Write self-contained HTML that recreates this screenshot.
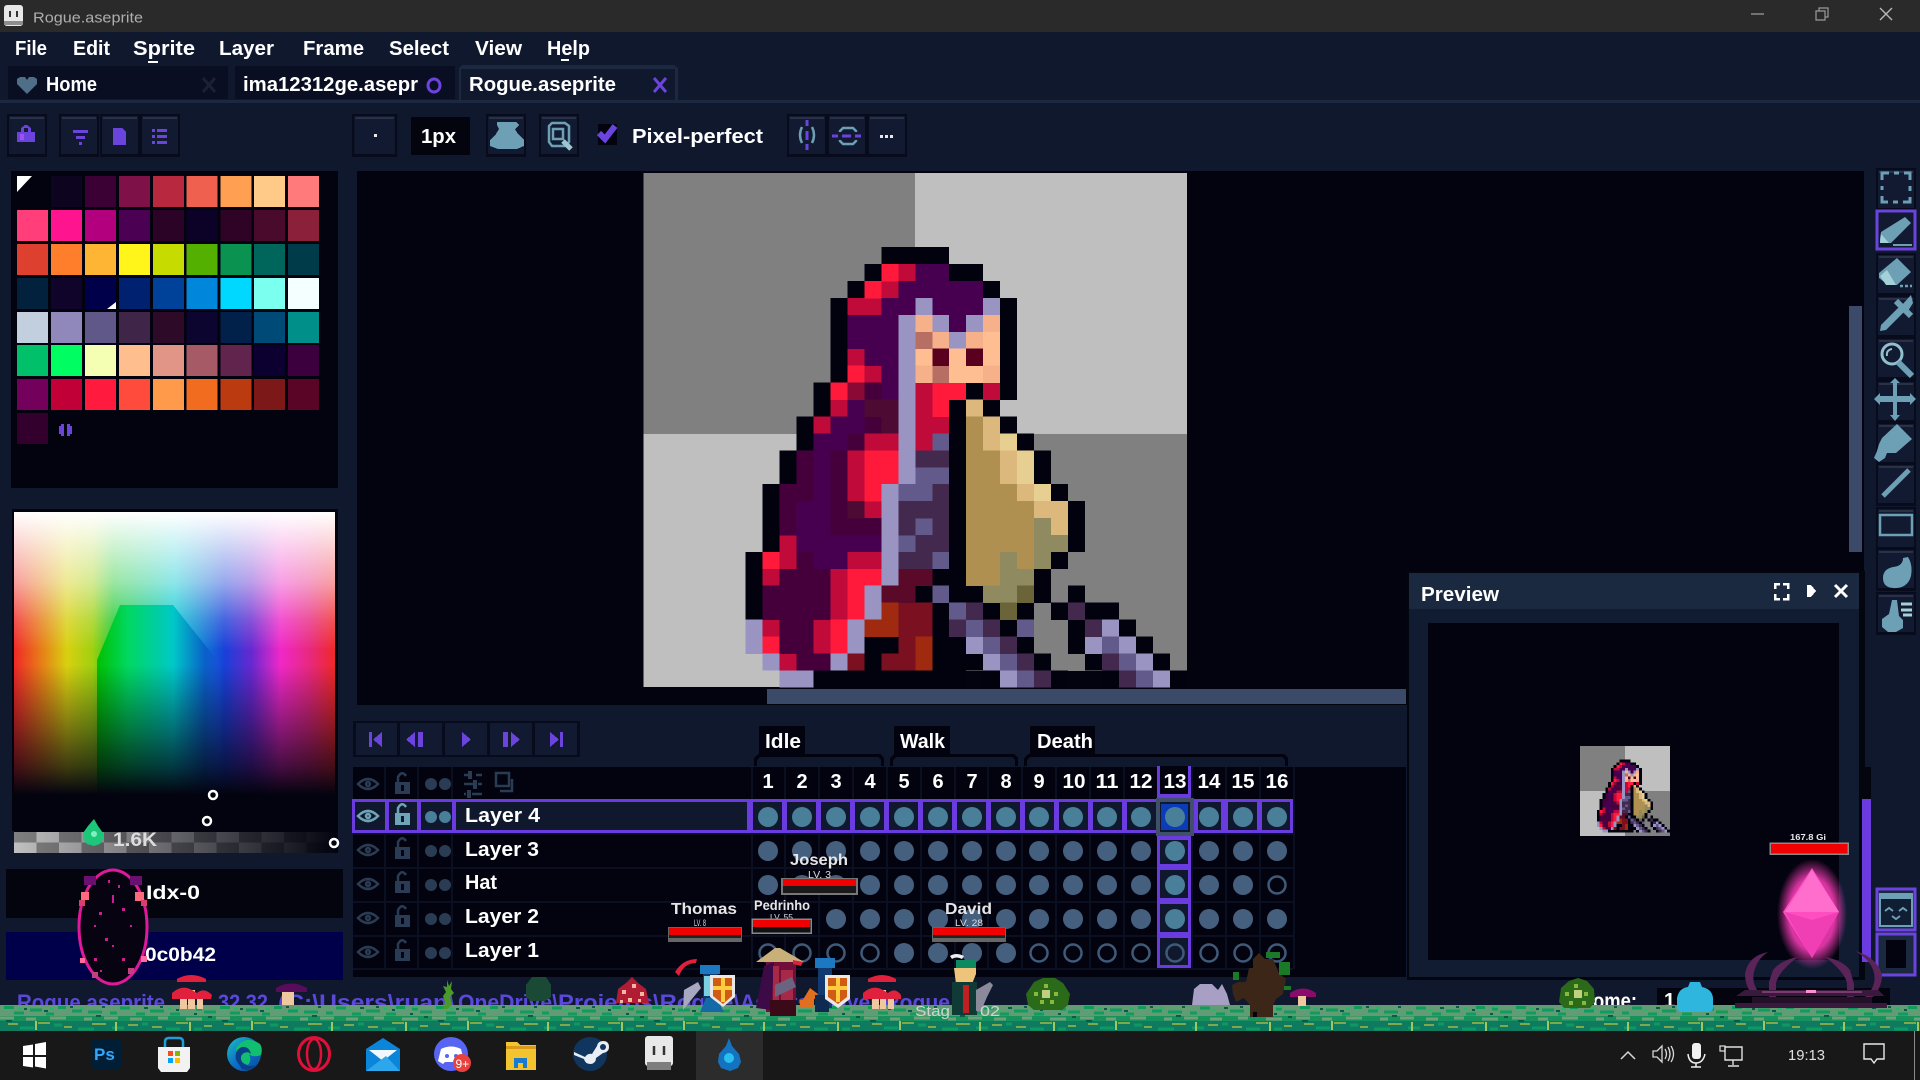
<!DOCTYPE html>
<html><head><meta charset="utf-8"><title>Rogue.aseprite</title>
<style>
html,body{margin:0;padding:0;background:#10182e;width:1920px;height:1080px;overflow:hidden}
svg{display:block;position:absolute;left:0;top:0}
text{font-family:"Liberation Sans",sans-serif;font-weight:700;fill:#fff}
.n{font-weight:400}
.c{shape-rendering:crispEdges}
</style></head><body>
<svg width="1920" height="1080" viewBox="0 0 1920 1080">
<defs>
<linearGradient id="hue" x1="0" x2="1" y1="0" y2="0"><stop offset="0" stop-color="#f02828"/><stop offset=".08" stop-color="#e87818"/><stop offset=".165" stop-color="#d8d010"/><stop offset=".245" stop-color="#a0d010"/><stop offset=".31" stop-color="#20c830"/><stop offset=".5" stop-color="#00c8d0"/><stop offset=".655" stop-color="#1840d8"/><stop offset=".74" stop-color="#6828d0"/><stop offset=".83" stop-color="#f028c8"/><stop offset=".92" stop-color="#e82880"/><stop offset="1" stop-color="#f02828"/></linearGradient>
<linearGradient id="dome" x1="97" x2="220" y1="0" y2="0" gradientUnits="userSpaceOnUse"><stop offset="0" stop-color="#00c000"/><stop offset=".25" stop-color="#00d860"/><stop offset=".62" stop-color="#00c8c8"/><stop offset=".88" stop-color="#0a60c8"/><stop offset="1" stop-color="#1840d8" stop-opacity="0"/></linearGradient>
<linearGradient id="wh" x1="0" x2="0" y1="512" y2="650" gradientUnits="userSpaceOnUse"><stop offset="0" stop-color="#fff" stop-opacity="1"/><stop offset=".51" stop-color="#fff" stop-opacity=".55"/><stop offset=".78" stop-color="#fff" stop-opacity=".2"/><stop offset="1" stop-color="#fff" stop-opacity="0"/></linearGradient>
<linearGradient id="bl" x1="0" x2="0" y1="665" y2="795" gradientUnits="userSpaceOnUse"><stop offset="0" stop-color="#03030f" stop-opacity="0"/><stop offset=".5" stop-color="#03030f" stop-opacity=".45"/><stop offset=".78" stop-color="#03030f" stop-opacity=".72"/><stop offset="1" stop-color="#03030f" stop-opacity="1"/></linearGradient>
<linearGradient id="fade" x1="0" x2="1" y1="0" y2="0"><stop offset="0" stop-color="#03030f" stop-opacity="0"/><stop offset="1" stop-color="#03030f" stop-opacity="1"/></linearGradient>
<radialGradient id="glow"><stop offset=".65" stop-color="#ff3ebc" stop-opacity=".85"/><stop offset="1" stop-color="#ff3ebc" stop-opacity="0"/></radialGradient>
<linearGradient id="edge" x1="0" x2="1" y1="0" y2="1"><stop offset="0" stop-color="#1ec0c0"/><stop offset=".5" stop-color="#0c70c8"/><stop offset="1" stop-color="#0a4a9a"/></linearGradient>
<pattern id="chk" width="45" height="21" patternUnits="userSpaceOnUse" patternTransform="translate(14 832)"><rect width="45" height="21" fill="#c0c0c0"/><rect width="22.5" height="10.5" fill="#808080"/><rect x="22.5" y="10.5" width="22.5" height="10.5" fill="#808080"/></pattern>
<pattern id="grass" width="216" height="26" patternUnits="userSpaceOnUse" patternTransform="translate(0 1005)">
<rect width="216" height="26" fill="#0e7a60"/>
<rect width="216" height="11" fill="#629c74"/>
<rect y="11" width="216" height="5" fill="#17925c"/>
<path d="M4 2.5h10M30 5h12M58 2.5h8M88 7h14M120 3h10M150 6h14M180 2.5h9M204 7h12M14 8h10M46 9h8M72 6h10M110 8h7M136 9h9M170 9h10M196 4h6" stroke="#0f9c5c" stroke-width="3" fill="none"/>
<path d="M0 13h14M26 14h10M50 13h16M84 14h8M104 13h14M130 14h12M158 13h10M186 14h16" stroke="#6fa078" stroke-width="3" fill="none"/>
<path d="M8 19h10M38 18h12M64 22h8M92 19h14M128 20h10M152 22h10M176 18h12M204 21h8" stroke="#7ea84a" stroke-width="2" fill="none"/>
<path d="M20 23h14M54 20h8M78 24h16M112 23h12M142 19h6M166 24h14M194 24h8" stroke="#0c9a60" stroke-width="3" fill="none"/>
<path d="M36 16v9M116 17v9M190 17v9" stroke="#a0c860" stroke-width="2" fill="none"/>
<path d="M6 16h6M44 6h4M96 11h5M144 3h4M176 5h3M208 12h4M24 4h3M70 2h3M102 2h3M160 2h3M194 9h3" stroke="#0a5a48" stroke-width="2" fill="none"/>
<path d="M18 4h4M50 4h3M80 3h4M132 5h3M168 4h3M198 2h3" stroke="#22b868" stroke-width="2" fill="none"/>
</pattern>
<g id="btn"><rect width="40" height="43" fill="#080b1b"/><rect x="2" y="2" width="36" height="38" fill="#111a30"/><rect x="3" y="3" width="34" height="2" fill="#2a3147"/></g>
<g id="spr" fill="none" stroke-width="1.02" class="c">
<path stroke="#02020f" d="M14 .5h4M13 1.5h1M18 1.5h2M12 2.5h1M20 2.5h1M11 3.5h1M21 3.5h1M11 4.5h1M21 4.5h1M11 5.5h1M21 5.5h1M11 6.5h1M21 6.5h1M11 7.5h1M21 7.5h1M10 8.5h1M19 8.5h1M21 8.5h1M10 9.5h1M18 9.5h1M20 9.5h1M9 10.5h1M18 10.5h1M21 10.5h1M9 11.5h1M18 11.5h1M22 11.5h1M8 12.5h1M18 12.5h1M23 12.5h1M8 13.5h1M18 13.5h1M23 13.5h1M7 14.5h1M18 14.5h1M24 14.5h1M7 15.5h1M18 15.5h1M25 15.5h1M7 16.5h1M18 16.5h1M25 16.5h1M7 17.5h1M18 17.5h1M25 17.5h1M6 18.5h1M18 18.5h1M24 18.5h1M6 19.5h1M17 19.5h2M23 19.5h1M6 20.5h1M16 20.5h1M18 20.5h2M23 20.5h1M25 20.5h1M6 21.5h1M17 21.5h1M20 21.5h1M22 21.5h1M24 21.5h1M26 21.5h2M17 22.5h1M21 22.5h1M25 22.5h1M28 22.5h1M13 23.5h2M17 23.5h2M22 23.5h1M25 23.5h1M29 23.5h1M13 24.5h1M17 24.5h3M23 24.5h1M26 24.5h1M30 24.5h1M10 25.5h9M20 25.5h1M24 25.5h1M27 25.5h1M31 25.5h1"/>
<path stroke="#bf0a3a" d="M15 1.5h1M14 2.5h1M12 3.5h2M12 6.5h1M13 7.5h1M11 9.5h1M10 10.5h1M16 10.5h1M17 10.5h1M13 11.5h2M16 11.5h1M16 8.5h1M20 8.5h1M16 9.5h1M12 12.5h1M12 13.5h1M12 14.5h1M13 15.5h1M8 17.5h1M8 18.5h1M12 18.5h2M7 19.5h1M11 19.5h1M11 20.5h1M11 21.5h1M7 22.5h1M10 22.5h1M10 23.5h1M8 24.5h1"/>
<path stroke="#ff1a3c" d="M14 1.5h1M13 2.5h1M12 7.5h1M11 8.5h1M17 8.5h2M17 9.5h1M13 12.5h2M13 13.5h2M13 14.5h1M7 18.5h1M12 19.5h2M12 20.5h1M12 21.5h1M11 22.5h1M7 23.5h1M11 23.5h1"/>
<path stroke="#47004f" d="M16 1.5h2M15 2.5h5M14 3.5h2M17 3.5h3M12 4.5h3M18 4.5h1M12 5.5h3M13 6.5h2M14 7.5h1M14 8.5h1M12 9.5h1M11 10.5h2M10 11.5h2M10 12.5h1M10 13.5h1M10 14.5h1M9 15.5h2M9 16.5h2M9 17.5h5M10 18.5h2"/>
<path stroke="#45003c" d="M13 8.5h1M13 10.5h1M12 11.5h1M9 12.5h1M11 12.5h1M9 13.5h1M11 13.5h1M8 14.5h2M11 14.5h1M8 15.5h1M11 15.5h1M8 16.5h1M11 16.5h3M9 18.5h1M8 19.5h3M7 20.5h4M7 21.5h4M8 22.5h2M8 23.5h2M9 24.5h2"/>
<path stroke="#4d0a33" d="M13 9.5h2M14 10.5h1M12 15.5h1"/>
<path stroke="#8a0a35" d="M12 8.5h1"/>
<path stroke="#9a94c2" d="M16 3.5h1M20 3.5h1M15 4.5h1M17 4.5h1M19 4.5h1M15 5.5h1M18 5.5h1M15 6.5h1M15 7.5h1M15 8.5h1M15 9.5h1M15 10.5h1M15 11.5h1M15 12.5h1M15 13.5h1M14 14.5h1M14 15.5h1M14 16.5h1M14 17.5h1M14 18.5h1M14 19.5h1M13 20.5h1M13 21.5h1M6 22.5h1M12 22.5h1M27 22.5h1M6 23.5h1M12 23.5h1M19 23.5h1M26 23.5h1M28 23.5h1M7 24.5h1M11 24.5h1M20 24.5h1M29 24.5h1M8 25.5h2M21 25.5h1M30 25.5h1"/>
<path stroke="#625a8a" d="M17 11.5h1M16 13.5h2M15 14.5h2M16 16.5h1M15 17.5h1M17 18.5h1M17 20.5h1M18 21.5h1M19 22.5h1M22 22.5h1M20 23.5h1M27 23.5h1M21 24.5h1M28 24.5h1M22 25.5h1M29 25.5h1"/>
<path stroke="#44294f" d="M16 12.5h2M17 14.5h1M15 15.5h3M15 16.5h1M17 16.5h1M16 17.5h2M15 18.5h2M19 21.5h1M25 21.5h1M18 22.5h1M20 22.5h1M26 22.5h1M21 23.5h1M22 24.5h1M27 24.5h1M23 25.5h1M28 25.5h1"/>
<path stroke="#ffbe92" d="M20 5.5h1M16 6.5h1M18 6.5h1M20 6.5h1M18 7.5h2"/>
<path stroke="#f6b18b" d="M16 4.5h1M20 4.5h1M17 5.5h1M19 5.5h1M16 7.5h1M20 7.5h1"/>
<path stroke="#b76e63" d="M16 5.5h1M17 7.5h1"/>
<path stroke="#5a001f" d="M17 6.5h1M19 6.5h1"/>
<path stroke="#e6cf90" d="M21 11.5h1M22 12.5h1M22 13.5h1M23 14.5h1"/>
<path stroke="#dcb87c" d="M19 9.5h1M20 10.5h1M20 11.5h1M21 12.5h1M21 13.5h1M22 14.5h1M23 15.5h2M24 16.5h1"/>
<path stroke="#b09050" d="M19 10.5h1M19 11.5h1M19 12.5h2M19 13.5h2M19 14.5h3M19 15.5h4M19 16.5h4M19 17.5h4M19 18.5h2M22 18.5h1M19 19.5h2"/>
<path stroke="#8f8a5f" d="M23 16.5h1M23 17.5h2M21 18.5h1M23 18.5h1M21 19.5h2M20 20.5h2"/>
<path stroke="#6b6438" d="M22 20.5h1M21 21.5h1"/>
<path stroke="#7a1020" d="M15 21.5h2M15 22.5h2M15 23.5h1M12 24.5h1M14 24.5h2"/>
<path stroke="#5a0a28" d="M15 19.5h2M14 20.5h2"/>
<path stroke="#a02a10" d="M14 21.5h1M13 22.5h2M16 23.5h1M16 24.5h1"/>
</g>
</defs>

<!-- base -->
<rect width="1920" height="1080" fill="#10182e" class="c"/>
<!-- title bar -->
<rect width="1920" height="32" fill="#2a2a2a" class="c"/>
<rect x="4" y="5" width="19" height="21" rx="3" fill="#e8e8e8"/><rect x="4" y="21" width="19" height="4" fill="#8e8e8e"/><path d="M10 11v6M17 11v6" stroke="#333" stroke-width="2"/>
<text x="33" y="22.5" font-size="15" class="n" style="fill:#aeaeae;font-weight:400" textLength="110" lengthAdjust="spacingAndGlyphs">Rogue.aseprite</text>
<path d="M1751 14h13" stroke="#9a9a9a" stroke-width="1.3"/><path d="M1816 11h9v9h-9zM1819 11v-3h9v9h-3" stroke="#9a9a9a" stroke-width="1.2" fill="none"/><path d="M1880 8l12 12M1892 8l-12 12" stroke="#b8b8b8" stroke-width="1.4"/>

<!-- menu -->
<g font-size="20">
<text x="15" y="55" textLength="32" lengthAdjust="spacingAndGlyphs">File</text>
<text x="73" y="55" textLength="37" lengthAdjust="spacingAndGlyphs">Edit</text>
<text x="133" y="55" textLength="62" lengthAdjust="spacingAndGlyphs">Sprite</text>
<text x="219" y="55" textLength="55" lengthAdjust="spacingAndGlyphs">Layer</text>
<text x="303" y="55" textLength="61" lengthAdjust="spacingAndGlyphs">Frame</text>
<text x="389" y="55" textLength="60" lengthAdjust="spacingAndGlyphs">Select</text>
<text x="475" y="55" textLength="47" lengthAdjust="spacingAndGlyphs">View</text>
<text x="547" y="55" textLength="43" lengthAdjust="spacingAndGlyphs">Help</text>
</g>
<path d="M148 62h10M561 60h8" stroke="#fff" stroke-width="2" class="c"/>

<!-- tabs -->
<rect x="0" y="100" width="1920" height="3" fill="#1c2840" class="c"/>
<rect x="8" y="66" width="220" height="33" fill="#0a0e22" class="c"/>
<rect x="235" y="66" width="220" height="33" fill="#0a0e22" class="c"/>
<path d="M459 101V68l3-3h212l4 3v33h-3V69h-214v32z" fill="#1c2840" class="c"/>
<path d="M27 94l-10-10v-5l3-2h5l2 3 2-3h5l3 2v5z" fill="#4f6f88"/>
<text x="46" y="91" font-size="20" textLength="51" lengthAdjust="spacingAndGlyphs">Home</text>
<path d="M203 78l12 14M215 78l-12 14" stroke="#1a2036" stroke-width="3"/>
<text x="243" y="91" font-size="20" textLength="175" lengthAdjust="spacingAndGlyphs">ima12312ge.asepr</text>
<ellipse cx="434" cy="85.500" rx="6" ry="6.500" fill="none" stroke="#6a44dd" stroke-width="3"/>
<text x="469" y="91" font-size="20" textLength="147" lengthAdjust="spacingAndGlyphs">Rogue.aseprite</text>
<path d="M654 78l12 14M666 78l-12 14" stroke="#6a44dd" stroke-width="3"/>

<!-- toolbar -->
<use href="#btn" transform="translate(7 114)"/>
<path d="M21 132v-4l4-3h2l4 3v4h4v10H17v-10z" fill="#6a44dd" class="c"/><rect x="24" y="128" width="4" height="4" fill="#111a30" class="c"/><rect x="20" y="134" width="4" height="6" fill="#a050f0" class="c"/>
<use href="#btn" transform="translate(59 114)"/><use href="#btn" transform="translate(100 114)"/><use href="#btn" transform="translate(140 114)"/>
<path d="M73 130h15v3H73zM76 136h9v3h-9zM79 142h3v3h-3z" fill="#6a44dd" class="c"/>
<path d="M113 128h9l4 4v13h-13z" fill="#6a44dd" class="c"/>
<path d="M152 129h3v3h-3zM157 129h10v3h-10zM152 135h3v3h-3zM157 135h10v3h-10zM152 141h3v3h-3zM157 141h10v3h-10z" fill="#6a44dd" class="c"/>
<use href="#btn" transform="translate(352 114) scale(1.13 1)"/>
<rect x="374" y="134" width="3" height="3" fill="#e8e8e8" class="c"/>
<rect x="411" y="117" width="59" height="38" fill="#04040f" class="c"/>
<text x="421" y="143" font-size="20" textLength="35" lengthAdjust="spacingAndGlyphs">1px</text>
<use href="#btn" transform="translate(486 114)"/>
<path d="M497 122h19l3 3-4 4 3 5 6 6v6l-7 3h-19l-8-3v-6l6-6 3-5-2-4z" fill="#6d9fb5" class="c"/>
<use href="#btn" transform="translate(539 114)"/>
<path d="M549 126l3-3h13l4 3v16l-4 4h-13l-3-4z" fill="none" stroke="#6d9fb5" stroke-width="2.5"/><path d="M553 129h10v10h-10z" fill="none" stroke="#6d9fb5" stroke-width="2.5"/><path d="M563 141l8 8" stroke="#9cc6d0" stroke-width="5"/>
<rect x="598" y="124" width="19" height="21" fill="#04040f" class="c"/>
<path d="M599 133l6 6 10-13" stroke="#6a44dd" stroke-width="6" fill="none"/>
<text x="632" y="143" font-size="20" textLength="131" lengthAdjust="spacingAndGlyphs">Pixel-perfect</text>
<use href="#btn" transform="translate(787 114)"/><use href="#btn" transform="translate(827 114)"/><use href="#btn" transform="translate(867 114)"/>
<path d="M802 127q-4 8 0 16M812 127q4 8 0 16M840 132v-1l3-3h10l3 3v1M840 140v1l3 3h10l3-3v-1" stroke="#6d9fb5" stroke-width="2.500" fill="none"/>
<path d="M807 120v6M807 131v9M807 144v6M832 136h6M842 136h9M855 136h6" stroke="#6a44dd" stroke-width="3" class="c"/>
<path d="M880 135h3v3h-3zM885 135h3v3h-3zM890 135h3v3h-3z" fill="#e8e8e8" class="c"/>

<!-- palette -->
<rect x="11" y="171" width="327" height="317" fill="#03030f" class="c"/>
<g class="c">
<rect x="17" y="176" width="31" height="31" fill="#03030f"/><rect x="51" y="176" width="31" height="31" fill="#0d0420"/><rect x="85" y="176" width="31" height="31" fill="#3b0034"/><rect x="119" y="176" width="31" height="31" fill="#7e1147"/><rect x="153" y="176" width="31" height="31" fill="#b8283f"/><rect x="186.500" y="176" width="31" height="31" fill="#f0604e"/><rect x="220.500" y="176" width="31" height="31" fill="#ff9f52"/><rect x="254" y="176" width="31" height="31" fill="#ffc987"/><rect x="288" y="176" width="31" height="31" fill="#ff7b7b"/>
<rect x="17" y="210" width="31" height="31" fill="#ff3e7a"/><rect x="51" y="210" width="31" height="31" fill="#ff1490"/><rect x="85" y="210" width="31" height="31" fill="#b3007f"/><rect x="119" y="210" width="31" height="31" fill="#4c0053"/><rect x="153" y="210" width="31" height="31" fill="#2a0326"/><rect x="186.500" y="210" width="31" height="31" fill="#0c0228"/><rect x="220.500" y="210" width="31" height="31" fill="#2e0326"/><rect x="254" y="210" width="31" height="31" fill="#4a0a2c"/><rect x="288" y="210" width="31" height="31" fill="#8a2039"/>
<rect x="17" y="244" width="31" height="31" fill="#de4030"/><rect x="51" y="244" width="31" height="31" fill="#ff7e2b"/><rect x="85" y="244" width="31" height="31" fill="#ffb534"/><rect x="119" y="244" width="31" height="31" fill="#fff51a"/><rect x="153" y="244" width="31" height="31" fill="#c6dc00"/><rect x="186.500" y="244" width="31" height="31" fill="#54b000"/><rect x="220.500" y="244" width="31" height="31" fill="#099250"/><rect x="254" y="244" width="31" height="31" fill="#00665c"/><rect x="288" y="244" width="31" height="31" fill="#003b4a"/>
<rect x="17" y="278" width="31" height="31" fill="#01213c"/><rect x="51" y="278" width="31" height="31" fill="#10042a"/><rect x="85" y="278" width="31" height="31" fill="#00004a"/><rect x="119" y="278" width="31" height="31" fill="#002070"/><rect x="153" y="278" width="31" height="31" fill="#00429a"/><rect x="186.500" y="278" width="31" height="31" fill="#0087dc"/><rect x="220.500" y="278" width="31" height="31" fill="#00d8ff"/><rect x="254" y="278" width="31" height="31" fill="#7bffee"/><rect x="288" y="278" width="31" height="31" fill="#f4ffff"/>
<rect x="17" y="312" width="31" height="31" fill="#c1cfdf"/><rect x="51" y="312" width="31" height="31" fill="#9088bb"/><rect x="85" y="312" width="31" height="31" fill="#5f5888"/><rect x="119" y="312" width="31" height="31" fill="#3f2648"/><rect x="153" y="312" width="31" height="31" fill="#2c0a28"/><rect x="186.500" y="312" width="31" height="31" fill="#0b0530"/><rect x="220.500" y="312" width="31" height="31" fill="#01204a"/><rect x="254" y="312" width="31" height="31" fill="#004a78"/><rect x="288" y="312" width="31" height="31" fill="#009089"/>
<rect x="17" y="345" width="31" height="31" fill="#00c06a"/><rect x="51" y="345" width="31" height="31" fill="#00fe63"/><rect x="85" y="345" width="31" height="31" fill="#f4ffb4"/><rect x="119" y="345" width="31" height="31" fill="#ffbe8e"/><rect x="153" y="345" width="31" height="31" fill="#e19586"/><rect x="186.500" y="345" width="31" height="31" fill="#a55a66"/><rect x="220.500" y="345" width="31" height="31" fill="#61244c"/><rect x="254" y="345" width="31" height="31" fill="#0c0030"/><rect x="288" y="345" width="31" height="31" fill="#3c003e"/>
<rect x="17" y="379" width="31" height="31" fill="#73005a"/><rect x="51" y="379" width="31" height="31" fill="#c10037"/><rect x="85" y="379" width="31" height="31" fill="#ff1a3e"/><rect x="119" y="379" width="31" height="31" fill="#ff4b3c"/><rect x="153" y="379" width="31" height="31" fill="#ff9a4a"/><rect x="186.500" y="379" width="31" height="31" fill="#f26c20"/><rect x="220.500" y="379" width="31" height="31" fill="#bb3a10"/><rect x="254" y="379" width="31" height="31" fill="#7c1818"/><rect x="288" y="379" width="31" height="31" fill="#5a0426"/>
<rect x="17" y="413" width="31" height="31" fill="#33002e"/>
</g>
<path d="M17 176h15l-15 16z" fill="#fff"/>
<path d="M116 302v7h-9z" fill="#fff"/>
<path d="M59 426h2v-2h3v12h-3v-2h-2zM67 424h3v2h2v8h-2v2h-3z" fill="#6a44dd" class="c"/>

<!-- color picker -->
<rect x="12" y="509" width="326" height="322" fill="#03030f" class="c"/>
<rect x="14" y="512" width="321" height="318" fill="url(#hue)" class="c"/>
<rect x="14" y="512" width="321" height="138" fill="url(#wh)" class="c"/>
<path d="M97 830V660l23-55h53l44 55v170z" fill="url(#dome)"/>
<rect x="14" y="665" width="321" height="130" fill="url(#bl)" class="c"/>
<rect x="14" y="795" width="324" height="37" fill="#03030f" class="c"/>
<rect x="14" y="832" width="324" height="21" fill="url(#chk)" class="c"/>
<rect x="14" y="832" width="324" height="21" fill="url(#fade)" class="c"/>
<g fill="none" stroke="#fff" stroke-width="2.5"><circle cx="213" cy="795" r="4"/><circle cx="207" cy="821" r="4"/><circle cx="334" cy="843" r="4"/></g>
<path d="M94 819l4 7 5 7v6l-3 5-6 2-7-2-4-5v-6l5-7z" fill="#1ec67a"/><circle cx="94" cy="834" r="3" fill="#7ff0c0"/>
<text x="113" y="846" font-size="19" textLength="44" lengthAdjust="spacingAndGlyphs" style="fill:#dcdcdc">1.6K</text>

<!-- idx / fg -->
<rect x="6" y="869" width="337" height="49" fill="#04040f" class="c"/>
<rect x="6" y="932" width="337" height="48" fill="#00004a" class="c"/>
<text x="146" y="899" font-size="19" textLength="54" lengthAdjust="spacingAndGlyphs">Idx-0</text>
<text x="145" y="961" font-size="19" textLength="71" lengthAdjust="spacingAndGlyphs">0c0b42</text>
<!-- portal -->
<ellipse cx="113" cy="927" rx="34" ry="57" fill="#070310" stroke="#e0189a" stroke-width="3"/>
<g class="c"><rect x="84" y="876" width="12" height="9" fill="#6a1070"/><rect x="130" y="876" width="12" height="9" fill="#6a1070"/><rect x="81" y="892" width="8" height="8" fill="#ff6a7d"/><rect x="135" y="892" width="9" height="9" fill="#ff6a7d"/><rect x="79" y="900" width="6" height="6" fill="#d8406a"/><rect x="141" y="900" width="6" height="6" fill="#d8406a"/><rect x="80" y="958" width="5" height="5" fill="#ff6a9d"/><rect x="141" y="956" width="6" height="6" fill="#ff6a9d"/><rect x="92" y="972" width="6" height="6" fill="#c04080"/><rect x="128" y="968" width="6" height="6" fill="#c04080"/>
<path d="M99 912h3v3h-3zM122 908h3v3h-3zM112 895h2v8h-2zM94 925h2v2h-2zM130 925h2v2h-2zM108 880h2v3h-2zM118 885h2v3h-2zM105 938h3v3h-3zM94 958h3v3h-3zM122 958h3v3h-3zM112 945h2v2h-2zM100 970h2v2h-2z" fill="#c82090"/></g>

<!-- status text -->
<g font-size="22" style="fill:#5a48d8">
<text x="17" y="1010" style="fill:#5a48d8" textLength="148" lengthAdjust="spacingAndGlyphs">Rogue.aseprite</text>
<text x="218" y="1010" style="fill:#5a48d8" textLength="50" lengthAdjust="spacingAndGlyphs">32 32</text>
<text x="278" y="1010" style="fill:#5a48d8" textLength="177" lengthAdjust="spacingAndGlyphs">(C:\Users\ruan\</text>
<text x="458" y="1010" style="fill:#5a48d8" textLength="100" lengthAdjust="spacingAndGlyphs">OneDrive\</text>
<text x="558" y="1010" style="fill:#5a48d8" textLength="182" lengthAdjust="spacingAndGlyphs">Projetos\Rogue\</text>
<text x="740" y="1010" style="fill:#5a48d8" textLength="210" lengthAdjust="spacingAndGlyphs">Assets\Player\Rogue</text>
</g>

<!-- editor -->
<rect x="357" y="171" width="1507" height="534" fill="#03030f" class="c"/>
<g class="c"><rect x="643.600" y="173" width="271.400" height="261" fill="#808080"/><rect x="915" y="173" width="272" height="261" fill="#bfbfbf"/><rect x="643.600" y="434" width="271.400" height="253" fill="#bfbfbf"/><rect x="915" y="434" width="272" height="237" fill="#808080"/></g>
<use href="#spr" transform="translate(643.6 247.3) scale(16.98 16.93)"/>
<rect x="767" y="689" width="639" height="15" fill="#3a4a68" class="c"/>
<rect x="1849" y="306" width="13" height="246" fill="#3a4a68" class="c"/>

<!-- right toolbar bg -->
<rect x="1864" y="160" width="56" height="845" fill="#10182e" class="c"/>
<g>
<use href="#btn" transform="translate(1876 168)"/><use href="#btn" transform="translate(1876 253)"/><use href="#btn" transform="translate(1876 295)"/><use href="#btn" transform="translate(1876 337)"/><use href="#btn" transform="translate(1876 380)"/><use href="#btn" transform="translate(1876 422)"/><use href="#btn" transform="translate(1876 463)"/><use href="#btn" transform="translate(1876 507)"/><use href="#btn" transform="translate(1876 548)"/><use href="#btn" transform="translate(1876 592)"/>
<rect x="1877" y="211" width="38" height="38" fill="#111a30" stroke="#6a44dd" stroke-width="3" class="c"/>
</g>
<g fill="#6d9fb5" stroke="none">
<path d="M1882 180v-7h7M1894 173h5M1904 173h6v7M1910 186v5M1910 197v5h-7M1898 202h-5M1888 202h-6v-6M1882 190v-4" stroke="#6d9fb5" stroke-width="3" fill="none"/>
<path d="M1905 217l6 6-20 20h-11v-4l1-7z"/><path d="M1881 234l8 9h-9z" fill="#a4d0d8"/><path d="M1893 245h19" stroke="#6d9fb5" stroke-width="2"/>
<path d="M1897 258l14 14-14 13h-9l-9-7v-5z"/><path d="M1880 276l7-6 9 15h-10z" fill="#a4d0d8"/><path d="M1900 286h3M1905 286h3M1910 286h2" stroke="#6d9fb5" stroke-width="2.500"/>
<path d="M1880 331l1-6 19-19 5 5-19 19z"/><path d="M1896 301l15 15" stroke="#6d9fb5" stroke-width="6"/><path d="M1902 305l9-10 2 8-5 8z"/>
<circle cx="1892" cy="354" r="10" fill="none" stroke="#8fc0cc" stroke-width="3"/><path d="M1898 362l14 14" stroke="#6d9fb5" stroke-width="6"/><path d="M1887 356q-1-6 5-7" stroke="#8fc0cc" stroke-width="2" fill="none"/>
<path d="M1895 378l5 5h-3v13h13v-3l6 6-6 6v-3h-13v13h3l-5 6-5-6h3v-13h-13v3l-6-6 6-6v3h13v-13h-3z"/>
<path d="M1897 424l15 15-16 14h-9l-2 5-6 4-5-4 3-7 2-7 3-6z"/>
<path d="M1883 496l26-26" stroke="#6d9fb5" stroke-width="5"/>
<rect x="1880" y="515" width="32" height="20" fill="none" stroke="#6d9fb5" stroke-width="2.500"/>
<path d="M1883 578q0-9 10-11 10-1 10-9l5-1q5 8 3 19-3 11-14 12-14 1-14-10z"/>
<path d="M1897 600l2 16 4 4v8l-7 4h-8l-6-5v-8l7-5 3-14z"/><path d="M1901 604h11M1901 610h11M1903 615h9" stroke="#a4d0d8" stroke-width="3"/>
</g>

<!-- timeline dark -->
<rect x="353" y="767" width="1053" height="210" fill="#03030f" class="c"/>
<rect x="353" y="721" width="227" height="36" fill="#080b1b" class="c"/>
<g class="c" fill="#111a30"><rect x="356" y="723" width="41" height="32"/><rect x="400" y="723" width="42" height="32"/><rect x="445" y="723" width="42" height="32"/><rect x="490" y="723" width="42" height="32"/><rect x="535" y="723" width="42" height="32"/></g>
<g fill="#6a44dd" class="c">
<path d="M369 732h3v15h-3zM382 732v15l-9-7.500z"/><path d="M415 732v15l-9-7.500zM418 732h5v15h-5z"/><path d="M462 732l9 7.500-9 7.500z"/><path d="M503 732h5v15h-5zM511 732l9 7.500-9 7.500z"/><path d="M550 732l9 7.500-9 7.500zM560 732h3v15h-3z"/>
</g>
<!-- tags -->
<g fill="#03030f" class="c"><rect x="759" y="726" width="46" height="28"/><rect x="894" y="726" width="56" height="28"/><rect x="1030" y="726" width="65" height="28"/>
<path d="M754 766v-8l4-4h122l4 4v8h-3v-6l-3-3H760l-3 3v6z"/><path d="M890 766v-8l4-4h120l4 4v8h-3v-6l-3-3H896l-3 3v6z"/><path d="M1024 766v-8l4-4h256l4 4v8h-3v-6l-3-3h-252l-3 3v6z"/></g>
<text x="765" y="748" font-size="20" textLength="36" lengthAdjust="spacingAndGlyphs">Idle</text>
<text x="900" y="748" font-size="20" textLength="45" lengthAdjust="spacingAndGlyphs">Walk</text>
<text x="1037" y="748" font-size="20" textLength="56" lengthAdjust="spacingAndGlyphs">Death</text>

<!-- grid lines -->
<path d="M353 800h940M353 834h940M353 868h940M353 902h940M353 936h940M353 969h940" stroke="#0a1022" stroke-width="2" class="c"/>
<path d="M385 767v202M418 767v202M452 767v202M752 767v202M785 767v202M819 767v202M853 767v202M887 767v202M921 767v202M955 767v202M988 767v202M1022 767v202M1056 767v202M1090 767v202M1124 767v202M1158 767v202M1192 767v202M1226 767v202M1260 767v202M1294 767v202" stroke="#0a1022" stroke-width="2" class="c"/>

<!-- selected row -->
<rect x="352" y="799" width="941" height="34" fill="#6a3ce0" class="c"/>
<g fill="#10182e" class="c">
<rect x="355" y="802" width="30" height="28"/><rect x="389" y="802" width="28" height="28"/><rect x="421" y="802" width="31" height="28"/><rect x="456" y="802" width="291" height="28"/>
<rect x="753" y="802" width="29" height="28"/><rect x="787" y="802" width="29" height="28"/><rect x="821" y="802" width="29" height="28"/><rect x="855" y="802" width="29" height="28"/><rect x="889" y="802" width="29" height="28"/><rect x="923" y="802" width="29" height="28"/><rect x="957" y="802" width="29" height="28"/><rect x="991" y="802" width="29" height="28"/><rect x="1025" y="802" width="29" height="28"/><rect x="1059" y="802" width="29" height="28"/><rect x="1093" y="802" width="29" height="28"/><rect x="1127" y="802" width="29" height="28"/><rect x="1198" y="802" width="23" height="28"/><rect x="1228" y="802" width="29" height="28"/><rect x="1262" y="802" width="28" height="28"/>
</g>
<!-- col 13 -->
<rect x="1157" y="766" width="34" height="202" fill="#6a3ce0" class="c"/>
<rect x="1160" y="766" width="28" height="28" fill="#03030f" class="c"/>
<g fill="#10182e" class="c"><rect x="1160" y="840" width="28" height="24"/><rect x="1160" y="870" width="28" height="28"/><rect x="1160" y="904" width="28" height="28"/><rect x="1160" y="938" width="28" height="27"/></g>
<rect x="1156" y="798" width="38" height="38" fill="#3f5068" class="c"/><rect x="1160" y="802" width="30" height="30" fill="#10182e" class="c"/><rect x="1161" y="804" width="27" height="26" fill="#0a3cb8" class="c"/>

<!-- header icons -->
<g fill="none" stroke="#2a3c54" stroke-width="2.500">
<path d="M358 784q10-10 20 0q-10 10-20 0z"/><circle cx="368" cy="784" r="2"/>
<path d="M398 782v-5q4-7 8-1"/>
<path d="M464 775h6M476 775h6M464 784h10M478 784h4M464 794h2M472 794h10"/>
<rect x="496" y="773" width="13" height="13"/><path d="M512 779v12h-12"/>
</g>
<rect x="395" y="782" width="15" height="12" fill="#2a3c54" class="c"/><rect x="401" y="785" width="3" height="6" fill="#03030f" class="c"/>
<circle cx="431" cy="784" r="6" fill="#2a3c54"/><circle cx="445" cy="784" r="6" fill="#2a3c54"/>
<path d="M470 771v8M475 780v9M469 790v8" stroke="#2a3c54" stroke-width="4" fill="none"/>
<!-- row icons -->
<g fill="none" stroke="#6fa3b8" stroke-width="2.500">
<path d="M358 816q10-10 20 0q-10 10-20 0z"/><circle cx="368" cy="816" r="2"/>
<path d="M398 813v-5q4-7 8-1"/>
</g>
<rect x="395" y="813" width="15" height="12" fill="#6fa3b8" class="c"/><rect x="401" y="816" width="3" height="6" fill="#10182e" class="c"/>
<circle cx="431" cy="817" r="6" fill="#4a7f9a"/><circle cx="445" cy="817" r="6" fill="#4a7f9a"/>
<g fill="none" stroke="#2a3c54" stroke-width="2.500">
<path d="M358 850q10-10 20 0q-10 10-20 0zM398 847v-5q4-7 8-1"/><circle cx="368" cy="850" r="2"/>
<path d="M358 884q10-10 20 0q-10 10-20 0zM398 881v-5q4-7 8-1"/><circle cx="368" cy="884" r="2"/>
<path d="M358 918q10-10 20 0q-10 10-20 0zM398 915v-5q4-7 8-1"/><circle cx="368" cy="918" r="2"/>
<path d="M358 952q10-10 20 0q-10 10-20 0zM398 949v-5q4-7 8-1"/><circle cx="368" cy="952" r="2"/>
</g>
<g fill="#2a3c54" class="c"><rect x="395" y="847" width="15" height="12"/><rect x="395" y="881" width="15" height="12"/><rect x="395" y="915" width="15" height="12"/><rect x="395" y="949" width="15" height="12"/></g>
<g fill="#03030f" class="c"><rect x="401" y="850" width="3" height="6"/><rect x="401" y="884" width="3" height="6"/><rect x="401" y="918" width="3" height="6"/><rect x="401" y="952" width="3" height="6"/></g>
<g fill="#2a3c54"><circle cx="431" cy="851" r="6"/><circle cx="445" cy="851" r="6"/><circle cx="431" cy="885" r="6"/><circle cx="445" cy="885" r="6"/><circle cx="431" cy="919" r="6"/><circle cx="445" cy="919" r="6"/><circle cx="431" cy="953" r="6"/><circle cx="445" cy="953" r="6"/></g>

<!-- layer names -->
<g font-size="20">
<text x="465" y="822" textLength="75" lengthAdjust="spacingAndGlyphs">Layer 4</text>
<text x="465" y="856" textLength="74" lengthAdjust="spacingAndGlyphs">Layer 3</text>
<text x="465" y="889" textLength="32" lengthAdjust="spacingAndGlyphs">Hat</text>
<text x="465" y="923" textLength="74" lengthAdjust="spacingAndGlyphs">Layer 2</text>
<text x="465" y="957" textLength="74" lengthAdjust="spacingAndGlyphs">Layer 1</text>
</g>
<!-- frame numbers -->
<g font-size="20" text-anchor="middle">
<text x="768" y="788">1</text><text x="802" y="788">2</text><text x="836" y="788">3</text><text x="870" y="788">4</text><text x="904" y="788">5</text><text x="938" y="788">6</text><text x="972" y="788">7</text><text x="1006" y="788">8</text><text x="1039" y="788">9</text>
<text x="1074" y="788" textLength="23" lengthAdjust="spacingAndGlyphs">10</text><text x="1107" y="788" textLength="23" lengthAdjust="spacingAndGlyphs">11</text><text x="1141" y="788" textLength="23" lengthAdjust="spacingAndGlyphs">12</text><text x="1175" y="788" textLength="23" lengthAdjust="spacingAndGlyphs">13</text><text x="1209" y="788" textLength="23" lengthAdjust="spacingAndGlyphs">14</text><text x="1243" y="788" textLength="23" lengthAdjust="spacingAndGlyphs">15</text><text x="1277" y="788" textLength="23" lengthAdjust="spacingAndGlyphs">16</text>
</g>
<!-- dots row1 -->
<g fill="#4a7f9a">
<circle cx="768" cy="817" r="10"/><circle cx="802" cy="817" r="10"/><circle cx="836" cy="817" r="10"/><circle cx="870" cy="817" r="10"/><circle cx="904" cy="817" r="10"/><circle cx="938" cy="817" r="10"/><circle cx="972" cy="817" r="10"/><circle cx="1006" cy="817" r="10"/><circle cx="1039" cy="817" r="10"/><circle cx="1073" cy="817" r="10"/><circle cx="1107" cy="817" r="10"/><circle cx="1141" cy="817" r="10"/><circle cx="1175" cy="817" r="10"/><circle cx="1209" cy="817" r="10"/><circle cx="1243" cy="817" r="10"/><circle cx="1277" cy="817" r="10"/>
<circle cx="1175" cy="851" r="10"/><circle cx="1175" cy="885" r="10"/><circle cx="1175" cy="919" r="10"/>
</g>
<g fill="#45607f">
<circle cx="768" cy="851" r="10"/><circle cx="802" cy="851" r="10"/><circle cx="836" cy="851" r="10"/><circle cx="870" cy="851" r="10"/><circle cx="904" cy="851" r="10"/><circle cx="938" cy="851" r="10"/><circle cx="972" cy="851" r="10"/><circle cx="1006" cy="851" r="10"/><circle cx="1039" cy="851" r="10"/><circle cx="1073" cy="851" r="10"/><circle cx="1107" cy="851" r="10"/><circle cx="1141" cy="851" r="10"/><circle cx="1209" cy="851" r="10"/><circle cx="1243" cy="851" r="10"/><circle cx="1277" cy="851" r="10"/>
<circle cx="768" cy="885" r="10"/><circle cx="802" cy="885" r="10"/><circle cx="836" cy="885" r="10"/><circle cx="870" cy="885" r="10"/><circle cx="904" cy="885" r="10"/><circle cx="938" cy="885" r="10"/><circle cx="972" cy="885" r="10"/><circle cx="1006" cy="885" r="10"/><circle cx="1039" cy="885" r="10"/><circle cx="1073" cy="885" r="10"/><circle cx="1107" cy="885" r="10"/><circle cx="1141" cy="885" r="10"/><circle cx="1209" cy="885" r="10"/><circle cx="1243" cy="885" r="10"/>
<circle cx="836" cy="919" r="10"/><circle cx="870" cy="919" r="10"/><circle cx="904" cy="919" r="10"/><circle cx="938" cy="919" r="10"/><circle cx="972" cy="919" r="10"/><circle cx="1006" cy="919" r="10"/><circle cx="1039" cy="919" r="10"/><circle cx="1073" cy="919" r="10"/><circle cx="1107" cy="919" r="10"/><circle cx="1141" cy="919" r="10"/><circle cx="1209" cy="919" r="10"/><circle cx="1243" cy="919" r="10"/><circle cx="1277" cy="919" r="10"/>
<circle cx="904" cy="953" r="10"/><circle cx="938" cy="953" r="10"/><circle cx="972" cy="953" r="10"/><circle cx="1006" cy="953" r="10"/>
</g>
<g fill="none" stroke="#3f5a78" stroke-width="2.500">
<circle cx="1277" cy="885" r="8.500"/>
<circle cx="768" cy="953" r="8.500"/><circle cx="802" cy="953" r="8.500"/><circle cx="836" cy="953" r="8.500"/><circle cx="870" cy="953" r="8.500"/><circle cx="1039" cy="953" r="8.500"/><circle cx="1073" cy="953" r="8.500"/><circle cx="1107" cy="953" r="8.500"/><circle cx="1141" cy="953" r="8.500"/><circle cx="1175" cy="953" r="8.500"/><circle cx="1209" cy="953" r="8.500"/><circle cx="1243" cy="953" r="8.500"/><circle cx="1277" cy="953" r="8.500"/>
</g>

<!-- preview window -->
<rect x="1407" y="571" width="458" height="409" fill="#04060f" class="c"/>
<rect x="1409" y="573" width="450" height="404" fill="#111c33" class="c"/>
<rect x="1409" y="573" width="450" height="36" fill="#1a2840" class="c"/>
<text x="1421" y="601" font-size="20" textLength="78" lengthAdjust="spacingAndGlyphs">Preview</text>
<path d="M1775 589v-5h5M1783 584h5v5M1788 594v5h-5M1780 599h-5v-5" stroke="#fff" stroke-width="2.500" fill="none" class="c"/>
<path d="M1807 585l4 0 5 6-5 6-4 0z" fill="#fff" class="c"/>
<path d="M1835 585l12 12M1847 585l-12 12" stroke="#fff" stroke-width="3"/>
<rect x="1428" y="623" width="411" height="337" fill="#03030f" class="c"/>
<g class="c"><rect x="1580" y="746" width="45" height="45" fill="#808080"/><rect x="1625" y="746" width="45" height="45" fill="#bfbfbf"/><rect x="1580" y="791" width="45" height="45" fill="#bfbfbf"/><rect x="1625" y="791" width="45" height="45" fill="#808080"/></g>
<use href="#spr" transform="translate(1580 759.500) scale(2.81 2.81)"/>

<!-- vertical purple + bottom buttons -->
<rect x="1862" y="767" width="9" height="32" fill="#04060f" class="c"/>
<rect x="1862" y="799" width="9" height="163" fill="#6a3ce0" class="c"/>
<rect x="1877" y="889" width="38" height="41" fill="#1a2840" stroke="#6a44dd" stroke-width="3" class="c"/>
<rect x="1880" y="894" width="32" height="32" fill="#0f1e33" stroke="#6d9fb5" stroke-width="2"/><path d="M1881 897h30" stroke="#6d9fb5" stroke-width="4"/><path d="M1885 911l4-3 4 3M1899 911l4-3 4 3M1892 916l4 3 4-3" stroke="#6d9fb5" stroke-width="2" fill="none"/>
<rect x="1877" y="934" width="38" height="41" fill="#1a2840" stroke="#6a44dd" stroke-width="3" class="c"/>
<rect x="1886" y="940" width="20" height="28" fill="#03030f" class="c"/>

<!-- Frame -->
<text x="1593" y="1008" font-size="21" textLength="44" lengthAdjust="spacingAndGlyphs">ome:</text>
<rect x="1657" y="988" width="78" height="20" fill="#04040f" class="c"/>
<text x="1664" y="1007" font-size="20">1</text>
<rect x="1735" y="988" width="155" height="20" fill="#04040f" class="c"/>

<!-- grass -->
<rect x="0" y="1005" width="1920" height="26" fill="url(#grass)" class="c"/>
<!-- taskbar -->
<rect x="0" y="1031" width="1920" height="49" fill="#181818" class="c"/>
<rect x="696" y="1031" width="67" height="49" fill="#2c2c2c" class="c"/>

<!-- game overlay sprites -->
<g class="c">
<!-- mushroom 1 -->
<rect x="180" y="995" width="7" height="14" fill="#f0c8a0"/><rect x="188" y="990" width="7" height="19" fill="#f0c8a0"/><rect x="197" y="995" width="6" height="14" fill="#f0c8a0"/>
</g>
<path d="M177 979q14-8 29 0v3h-29zM172 993q10-9 20-3l5 3q7-6 15 2l-1 4h-39z" fill="#e0203c"/>
<path d="M276 988q15-9 31 0v4h-31z" fill="#5a0c5c"/><rect x="276" y="992" width="12" height="13" fill="#f0c8a0" transform="translate(6 0)" class="c"/>
<path d="M447 980l2 6 3-5-1 8 3 4-4 4 2 7-4 5h-5l2-7-2-6 3-4-3-6 4 1z" fill="#4a9a28"/>
<path d="M526 985l6-8h14l5 8v12l-6 4h-14l-5-4z" fill="#1a4a36" class="c"/>
<path d="M616 1003l2-14 8-6 6-6 6 6 8 6 3 14z" fill="#b01c34"/><path d="M622 990h4v4h-4zM632 984h4v4h-4zM640 992h4v4h-4zM628 998h4v4h-4zM620 1000h3v3h-3zM638 999h3v3h-3z" fill="#f0b8a0" class="c"/>
<!-- Thomas -->
<path d="M675 972q8-13 22-13l-1 4q-12 0-17 13z" fill="#e0203c"/>
<path d="M700 965h20v9h-20z" fill="#1c78c0" class="c"/><path d="M703 974h15v34h-15z" fill="#123a70" class="c"/><path d="M684 990l14-8 3 6-18 22z" fill="#a8a8c0"/><path d="M700 1012l6-14h10l8 14z" fill="#146aa8"/><rect x="704" y="976" width="6" height="20" fill="#7ad0e0" class="c"/>
<path d="M710 975h25v22l-12 10-13-10z" fill="#e8e8e8"/><path d="M713 978h19v18l-9 8-10-8z" fill="#d05c14"/><path d="M721 978h4v24h-4zM713 986h19v4h-19z" fill="#ffcc40" class="c"/>
<!-- Pedrinho -->
<path d="M756 962l19-14h5l24 14z" fill="#c8b078"/><rect x="766" y="962" width="30" height="50" fill="#70103a" class="c"/><path d="M756 1008l8-42 10-4-3 48z" fill="#3c0a46"/><path d="M773 966h6v46h-6zM781 970h12v42h-12z" fill="#a82848" class="c"/><path d="M775 985l17-8 4 10-21 10z" fill="#6a6480"/><path d="M770 1000h26v16h-26z" fill="#3a0a18" class="c"/><path d="M793 960l10 2-2 4-8-2z" fill="#e0203c"/>
<!-- Joseph -->
<path d="M815 958h20v10h-20z" fill="#1c78c0" class="c"/><path d="M818 968h14v40h-14z" fill="#123a70" class="c"/><path d="M798 1008l12-20 8 6-10 14zM800 1000h14v8h-14z" fill="#e07020"/><rect x="815" y="995" width="14" height="17" fill="#0e2a50" class="c"/>
<path d="M825 975h25v24l-12 9-13-9z" fill="#e8e8e8"/><path d="M828 978h19v19l-9 7-10-7z" fill="#d05c14"/><path d="M836 978h4v24h-4zM828 986h19v4h-19z" fill="#ffcc40" class="c"/>
<!-- mushroom 3 -->
<rect x="872" y="995" width="7" height="14" fill="#f0c8a0" class="c"/><rect x="880" y="990" width="6" height="19" fill="#f0c8a0" class="c"/><rect x="888" y="995" width="6" height="14" fill="#f0c8a0" class="c"/>
<path d="M868 979q14-8 28 0v3h-28zM863 993q10-9 20-3l5 3q7-6 13 2v4h-38z" fill="#e0203c"/>
<!-- David -->
<path d="M950 956q6-4 14 0l-2 3q-6-3-10 0z" fill="#eee"/><path d="M956 960h20v8h-20z" fill="#0f8a60" class="c"/><path d="M954 968h22v6l-4 10h-16z" fill="#eec47a"/><rect x="952" y="982" width="25" height="33" fill="#0f3a36" class="c"/><rect x="963" y="985" width="6" height="28" fill="#c02020" class="c"/><path d="M976 990l14-8 3 3-6 12-6 14h-5z" fill="#8a8a9a"/>
<path d="M1028 1005l-2-11 8-12 9-4h12l8 5 7 11-2 11-6 5h-28z" fill="#2a6a18"/><path d="M1034 992h4v4h-4zM1044 984h4v4h-4zM1054 992h4v4h-4zM1040 1000h4v4h-4zM1050 1000h4v4h-4z" fill="#88b840" class="c"/><rect x="1042" y="990" width="8" height="8" fill="#c0d080" class="c"/>
<path d="M1192 1005l2-16 6-5h12l6 6 4-6 5 10 3 11z" fill="#a8a0c4"/>
<path d="M1232 985l6-3h8l3-14h4v-9l6-6 6 6h8l6 14 7 6-3 15-7 5-3 6v12h-23v-12l-6-7-8 4-3-8z" fill="#3c2618"/><rect x="1253" y="1012" width="4" height="5" fill="#03030f" class="c"/><path d="M1266 952h14v6h-14zM1279 962h11v13h-11zM1233 972h6v8h-6zM1284 986h7v4h-7z" fill="#1a7a28" class="c"/>
<path d="M1290 993q13-9 26 0v4h-26z" fill="#8a0c6a"/><rect x="1298" y="996" width="8" height="10" fill="#f0c8a0" class="c"/>
<path d="M1559 1002l2-14 8-7 9-3 9 3 7 8 1 13-5 6h-26z" fill="#2a6a18"/><path d="M1565 992h4v4h-4zM1574 984h4v4h-4zM1584 992h4v4h-4zM1569 1001h4v4h-4zM1582 1001h4v4h-4z" fill="#88b840" class="c"/><rect x="1574" y="990" width="8" height="8" fill="#c0d080" class="c"/>
<path d="M1677 1009v-11q2-10 11-11l2-5h10l2 5q10 2 11 11v11l-3 3h-30z" fill="#2fb6de"/>

<!-- crystal -->
<ellipse cx="1812" cy="914" rx="35" ry="55" fill="url(#glow)"/>
<path d="M1812 868l27 44-27 46-29-46z" fill="#ff4ec0"/><path d="M1812 870l-27 42h27zM1812 912h27l-27-42z" fill="#ff6ecc"/><path d="M1785 912l27 8 27-8-27 46z" fill="#f03eb4"/>
<rect x="1770" y="843" width="78" height="11" fill="#f00000" stroke="#8a8a8a" stroke-width="1.500" class="c"/>
<text x="1790" y="840" font-size="8" textLength="36" lengthAdjust="spacingAndGlyphs" style="fill:#e8e8e8">167.8 Gi</text>
<path d="M1768 952q-20 4-23 22 0 12 8 22h9q-11-11-8-24 3-13 14-20zM1798 957q-17 3-25 13l-4 12v16h7v-15q3-12 22-26zM1825 957q17 3 25 13l4 14v14h-7v-15q-3-12-22-26zM1855 951q22 6 27 24 0 12-9 22h-8q12-11 9-24-3-13-19-22z" fill="#5a2458"/>
<path d="M1745 990h133l6 6h-148zM1735 1003h152v5h-152z" fill="#3a1a3c" class="c"/><path d="M1752 997h120v6h-120z" fill="#241028" class="c"/><path d="M1762 992h100" stroke="#7a3a70" stroke-width="2"/><rect x="1806" y="990" width="10" height="3" fill="#ff90d0" class="c"/>

<!-- names -->
<text x="790" y="865" font-size="16" textLength="58" lengthAdjust="spacingAndGlyphs" style="fill:#e6e6e6">Joseph</text>
<text x="808" y="878" font-size="10" textLength="23" lengthAdjust="spacingAndGlyphs" class="n" style="fill:#ddd;font-weight:400">LV. 3</text>
<rect x="782" y="879" width="75" height="15" fill="#1a1a1a" stroke="#777" stroke-width="2" class="c"/><rect x="783" y="879" width="73" height="7" fill="#f00000" class="c"/>
<text x="671" y="914" font-size="16" textLength="66" lengthAdjust="spacingAndGlyphs" style="fill:#e6e6e6">Thomas</text>
<text x="694" y="926" font-size="9" textLength="12" lengthAdjust="spacingAndGlyphs" class="n" style="fill:#ddd;font-weight:400">LV. 8</text>
<rect x="668" y="927" width="74" height="15" fill="#666" class="c"/><rect x="669" y="928" width="72" height="7" fill="#f00000" class="c"/><rect x="669" y="935" width="72" height="3" fill="#222" class="c"/>
<text x="754" y="910" font-size="14" textLength="56" lengthAdjust="spacingAndGlyphs" style="fill:#e6e6e6">Pedrinho</text>
<text x="770" y="920" font-size="8" textLength="23" lengthAdjust="spacingAndGlyphs" class="n" style="fill:#ddd;font-weight:400">LV. 55</text>
<rect x="752" y="919" width="59" height="14" fill="#111" stroke="#888" stroke-width="1.500" class="c"/><rect x="753" y="920" width="57" height="7" fill="#f00000" class="c"/>
<text x="945" y="914" font-size="16" textLength="47" lengthAdjust="spacingAndGlyphs" style="fill:#e6e6e6">David</text>
<text x="955" y="926" font-size="9" textLength="28" lengthAdjust="spacingAndGlyphs" class="n" style="fill:#ddd;font-weight:400">LV. 28</text>
<rect x="932" y="927" width="74" height="15" fill="#666" class="c"/><rect x="933" y="928" width="72" height="7" fill="#f00000" class="c"/><rect x="933" y="935" width="72" height="3" fill="#222" class="c"/>
<text x="915" y="1016" font-size="15" textLength="35" lengthAdjust="spacingAndGlyphs" class="n" style="fill:#c8d8d0;font-weight:400">Stag</text>
<text x="980" y="1016" font-size="15" textLength="20" lengthAdjust="spacingAndGlyphs" class="n" style="fill:#c8d8d0;font-weight:400">02</text>

<!-- taskbar icons -->
<path d="M23 1046l10-1.500v10.500H23zM35 1044l11-2v13H35zM23 1057h10v10.500l-10-1.500zM35 1057h11v11.500l-11-2z" fill="#fff"/>
<rect x="91" y="1039" width="30" height="30" rx="4" fill="#001e36"/><text x="94" y="1060" font-size="17" style="fill:#31a8ff">Ps</text>
<path d="M158 1047h32v21l-3 4h-26l-3-4z" fill="#f2f2f2"/><path d="M165 1047v-5q0-4 4-4h10q4 0 4 4v5" fill="none" stroke="#1e9ed8" stroke-width="2.500"/>
<rect x="168" y="1051" width="5" height="5" fill="#f25022" class="c"/><rect x="175" y="1051" width="5" height="5" fill="#7fba00" class="c"/><rect x="168" y="1058" width="5" height="5" fill="#00a4ef" class="c"/><rect x="175" y="1058" width="5" height="5" fill="#ffb900" class="c"/>
<circle cx="244" cy="1054" r="17" fill="url(#edge)"/><path d="M236 1048q10-14 24-4 3 5 1 11-8 3-12-1 3 6-1 11-11-3-12-17z" fill="#10c070"/><path d="M236 1060q-2-10 6-13 7-1 9 7-3-3-7-1-5 3-2 9 5 6 14 3-6 7-14 4z" fill="#0a3f8a"/>
<ellipse cx="314" cy="1054" rx="15.500" ry="16.500" fill="none" stroke="#e0103a" stroke-width="3"/><ellipse cx="314" cy="1054" rx="7" ry="15" fill="none" stroke="#e0103a" stroke-width="2.500"/>
<path d="M366 1049l17-11 17 11v22h-34z" fill="#0a85d9"/><path d="M369 1050h28l-14 11z" fill="#f2f8ff"/><path d="M366 1071l20-15 14 15z" fill="#2ea6ec"/>
<circle cx="451" cy="1054" r="17" fill="#5865f2"/><path d="M441 1049q10-5 20 0l3 12-5 3-2-2h-12l-2 2-5-3z" fill="#fff"/><circle cx="447" cy="1056" r="2" fill="#5865f2"/><circle cx="456" cy="1056" r="2" fill="#5865f2"/>
<circle cx="462" cy="1063" r="9" fill="#e8413e"/><text x="455.500" y="1068" font-size="12" class="n" style="fill:#fff;font-weight:400">9+</text>
<path d="M506 1042h11l3 3h16v25h-30z" fill="#f4c430" class="c"/><rect x="506" y="1046" width="30" height="3" fill="#d89a18" class="c"/><path d="M514 1068v-10h13v10h-4v-5h-5v5z" fill="#1a7ad0" class="c"/><rect x="506" y="1053" width="8" height="17" fill="#f4c430" class="c"/>
<circle cx="590" cy="1054" r="17" fill="#10365f"/><path d="M574 1052l11 5q3-4 7-3l5-8q1-5 6-5 6 0 6 6 0 5-6 6l-7 5q0 5-5 6-6 0-7-5l-10-4z" fill="#e8eef4"/><circle cx="603" cy="1047" r="3" fill="#10365f"/>
<rect x="645" y="1036" width="28" height="30" rx="3" fill="#e8e8e8"/><rect x="647" y="1062" width="24" height="8" fill="#7e7e7e" class="c"/><path d="M654 1046v9M664 1046v9" stroke="#333" stroke-width="2.500"/>
<path d="M729 1038l3 8 7 8 2 8-3 6-8 3-9-3-3-6 1-8 7-8z" fill="#1473c0"/><circle cx="729" cy="1058" r="5" fill="#28c0ef"/>
<!-- tray -->
<path d="M1621 1059l7-7 7 7" stroke="#d8d8d8" stroke-width="1.500" fill="none"/>
<path d="M1653 1051h4l5-5v16l-5-5h-4zM1665 1049q3 5 0 10M1668 1047q4 7 0 14M1671 1046q5 8 0 16" stroke="#d8d8d8" stroke-width="1.300" fill="none"/>
<rect x="1692" y="1043" width="9" height="16" rx="3" fill="#f0f0f0"/><path d="M1688 1054q1 9 8 9t9-9M1696 1063v4M1691 1067h10" stroke="#f0f0f0" stroke-width="1.500" fill="none"/>
<path d="M1725 1047h17v13h-17zM1733 1060v5M1728 1066h11" stroke="#e0e0e0" stroke-width="1.400" fill="none"/><rect x="1720" y="1046" width="5" height="5" fill="none" stroke="#e0e0e0" stroke-width="1.200"/>
<text x="1788" y="1060" font-size="15" class="n" style="fill:#e0e0e0;font-weight:400" textLength="37" lengthAdjust="spacingAndGlyphs">19:13</text>
<path d="M1864 1044h20v15h-7l-3 4-3-4h-7z" fill="none" stroke="#e8e8e8" stroke-width="1.400"/>
<rect x="1914" y="1031" width="1" height="49" fill="#8a8a8a"/>
</svg>
</body></html>
